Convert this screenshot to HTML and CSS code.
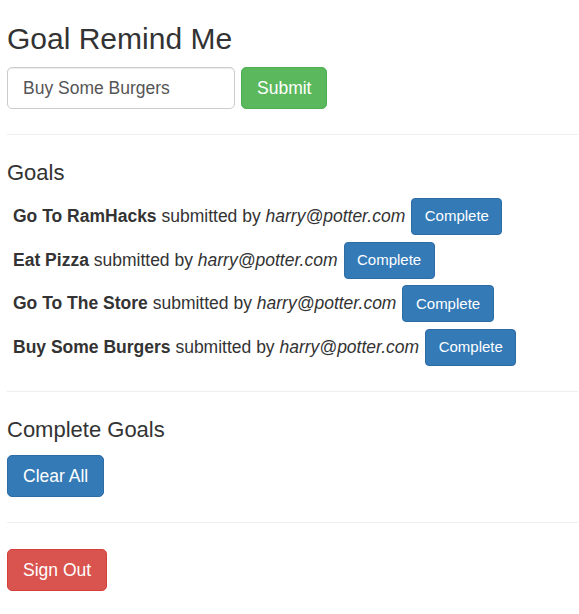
FILE: index.html
```html
<!DOCTYPE html>
<html>
<head>
<meta charset="utf-8">
<title>Goal Remind Me</title>
<link rel="stylesheet" href="styles.css">
</head>
<body>
<div class="page">
  <h1 class="title">Goal Remind Me</h1>
  <form class="goal-form">
    <input class="field" type="text" value="Buy Some Burgers">
    <button class="btn btn-success" type="button">Submit</button>
  </form>
  <hr class="rule">
  <h3 class="section">Goals</h3>
  <div class="goal-list">
    <div class="goal"><span class="text"><b>Go To RamHacks</b> submitted by <i>harry@potter.com</i></span><button class="btn btn-sm btn-primary" type="button">Complete</button></div>
    <div class="goal"><span class="text"><b>Eat Pizza</b> submitted by <i>harry@potter.com</i></span><button class="btn btn-sm btn-primary" type="button">Complete</button></div>
    <div class="goal"><span class="text"><b>Go To The Store</b> submitted by <i>harry@potter.com</i></span><button class="btn btn-sm btn-primary" type="button">Complete</button></div>
    <div class="goal"><span class="text"><b>Buy Some Burgers</b> submitted by <i>harry@potter.com</i></span><button class="btn btn-sm btn-primary" type="button">Complete</button></div>
  </div>
  <hr class="rule">
  <h3 class="section">Complete Goals</h3>
  <div class="actions">
    <button class="btn btn-primary" type="button">Clear All</button>
  </div>
  <hr class="rule rule-last">
  <div class="actions">
    <button class="btn btn-danger" type="button">Sign Out</button>
  </div>
</div>
</body>
</html>
```

FILE: styles.css
```css
* { box-sizing: border-box; }

html, body {
  margin: 0;
  padding: 0;
  background: #fff;
}

body {
  font-family: "Liberation Sans", Arial, Helvetica, sans-serif;
  font-size: 17.5px;
  line-height: 1.42857;
  color: #333;
}

.page {
  margin: 0 1px 0 7px;
  display: flex;
  flex-direction: column;
}

.title {
  font-size: 30px;
  font-weight: 500;
  line-height: 1.1;
  margin: 22px 0 12px;
}

.goal-form {
  display: flex;
  gap: 6px;
  margin: 0;
}

.field {
  width: 228px;
  height: 42px;
  padding: 7.5px 15px;
  font: inherit;
  font-size: 17.5px;
  color: #555;
  background: #fff;
  border: 1px solid #ccc;
  border-radius: 5px;
  box-shadow: inset 0 1px 1px rgba(0,0,0,.075);
}

.rule {
  border: 0;
  border-top: 1px solid #eee;
  margin: 25px 0 0;
  height: 0;
}

.section {
  font-size: 22px;
  font-weight: 500;
  line-height: 1.1;
  margin: 25.5px 0 13.3px;
}

.goal-list {
  display: flex;
  flex-direction: column;
  gap: 6.7px;
  padding-left: 6px;
}

.goal {
  display: flex;
  align-items: center;
  gap: 6px;
  height: 37px;
}

.text { white-space: nowrap; }

.btn {
  font-family: inherit;
  font-size: 17.5px;
  line-height: 25px;
  padding: 7.5px 15px;
  border: 1px solid transparent;
  border-radius: 5px;
  color: #fff;
  cursor: pointer;
  white-space: nowrap;
}

.btn-sm {
  font-size: 15px;
  line-height: 22.5px;
  padding: 6.25px 12.5px;
  border-radius: 4px;
}

.btn-success { background: #5cb85c; border-color: #4cae4c; }
.btn-primary { background: #337ab7; border-color: #2e6da4; }
.btn-danger  { background: #d9534f; border-color: #d43f3a; }

.actions {
  display: flex;
}

.rule-last + .actions {
  margin-top: 26px;
}
```
